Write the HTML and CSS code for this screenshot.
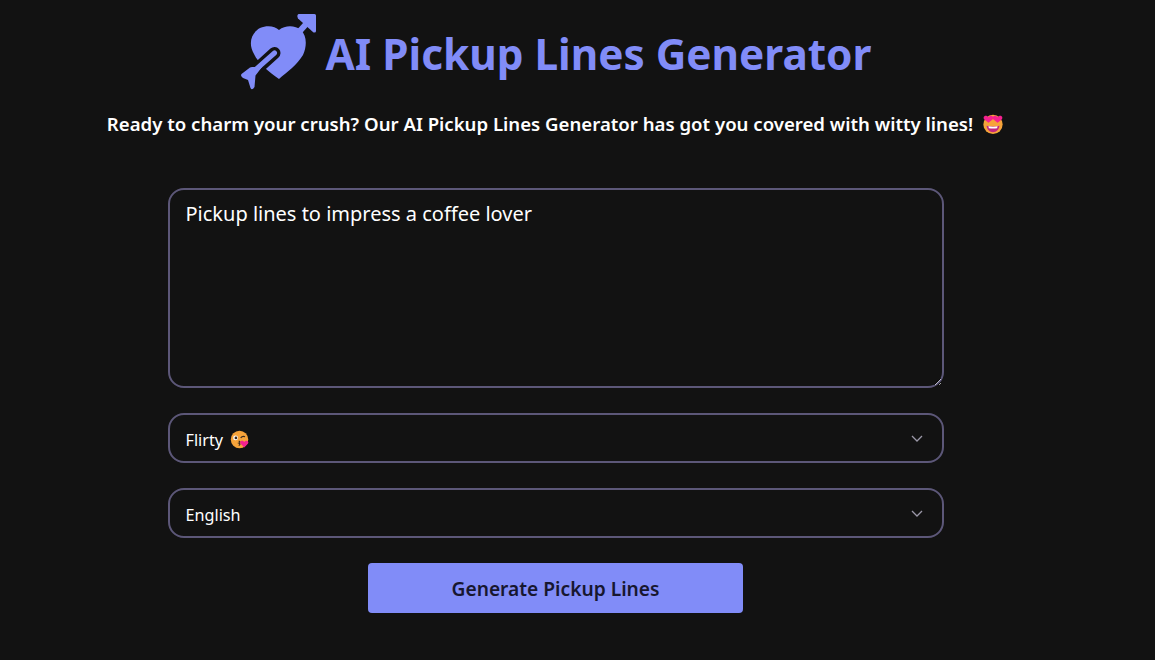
FILE: index.html
```html
<!DOCTYPE html>
<html lang="en">
<head>
  <meta charset="UTF-8">
  <meta name="viewport" content="width=device-width, initial-scale=1.0">
  <title>AI Pickup Lines Generator</title>
  <link rel="stylesheet" href="styles.css">
</head>
<body>
  <main class="page">
    <h1 class="title">
      <svg class="title-icon" viewBox="240 12 78 78" aria-hidden="true">
        <path d="M279 78C270 72 258 62 254 53 248 43 251 32 260 27 267 24 275 25 279 29 285 24 295 24 301 29 307 35 307 45 303 54 297 64 287 71 279 78Z" fill="#818cf8"/>
        <path d="M298 32 L308 21" stroke="#818cf8" stroke-width="6" fill="none"/>
        <path d="M298.500 13H314.500Q316 13 316 14.500V30Q316 32 313.500 31.500L298 17.500Q296.500 14 298.500 13Z" fill="#818cf8"/>
        <path d="M274.500 52 L248 76" stroke="#121212" stroke-width="12" stroke-linecap="round" fill="none"/>
        <path d="M274.500 52 L254 70" stroke="#818cf8" stroke-width="5" stroke-linecap="round" fill="none"/>
        <path d="M241.500 73 L250 66.500Q251 66 252 66H262L255.500 74.500 254.500 86Q252 90 250.500 87L248 79 243 77Q240 75 241.500 73Z" fill="#818cf8"/>
      </svg>
      <span class="title-text">AI Pickup Lines Generator</span>
    </h1>
    <p class="tagline">
      Ready to charm your crush? Our AI Pickup Lines Generator has got you covered with witty lines!
      <svg class="emoji emoji-big" viewBox="0 0 24 24" aria-hidden="true">
        <circle cx="12" cy="12.500" r="10.500" fill="#f6a33a"/>
        <path d="M5 14c4 1 10 1 14 0-.5 4.500-3.500 7-7 7s-6.500-2.500-7-7z" fill="#c2267e"/>
        <path d="M7 14.500c3 .6 7 .6 10 0l-.5 2c-3 .5-6 .5-9 0z" fill="#fff"/>
        <path d="M7 10.500 2.500 7C1 5.500 2 3 4 3c1.200 0 2.300.6 3 1.500C7.700 3.600 8.800 3 10 3c2 0 3 2.500 1.500 4z" fill="#f5218f"/>
        <path d="M17 10.500 12.500 7C11 5.500 12 3 14 3c1.200 0 2.300.6 3 1.500.7-.9 1.800-1.500 3-1.500 2 0 3 2.500 1.500 4z" fill="#f5218f"/>
      </svg>
    </p>
    <form class="form">
      <textarea class="prompt" rows="4">Pickup lines to impress a coffee lover</textarea>
      <div class="select" role="combobox" aria-expanded="false">
        <span>Flirty</span>
        <svg class="emoji" viewBox="0 0 24 24" aria-hidden="true">
          <circle cx="12" cy="12" r="11" fill="#f6a33a"/>
          <circle cx="7" cy="10" r="3" fill="#fff"/>
          <circle cx="7.500" cy="10" r="1.700" fill="#3a2a20"/>
          <path d="M13.500 10c1.500-2 3.500-2.500 5.500-1.500" stroke="#3a2a20" stroke-width="1.500" fill="none"/>
          <path d="M11 14c2 .5 2 2 .5 2.500 1.500.5 1.500 2 -.5 3" stroke="#3a2a20" stroke-width="1.500" fill="none"/>
          <path d="M18 22l-4.500-4.500c-1.500-1.500-.5-4 1.500-4 1.200 0 2.300.6 3 1.500.7-.9 1.800-1.500 3-1.500 2 0 3 2.500 1.500 4z" fill="#f5218f"/>
        </svg>
        <svg class="chevron" viewBox="0 0 12 7" aria-hidden="true"><path d="M1 1l5 5 5-5" fill="none" stroke="#9b98a8" stroke-width="1.300"/></svg>
      </div>
      <div class="select" role="combobox" aria-expanded="false">
        <span>English</span>
        <svg class="chevron" viewBox="0 0 12 7" aria-hidden="true"><path d="M1 1l5 5 5-5" fill="none" stroke="#9b98a8" stroke-width="1.300"/></svg>
      </div>
      <button class="generate" type="button">Generate Pickup Lines</button>
    </form>
  </main>
</body>
</html>
```

FILE: styles.css
```css
* { margin: 0; padding: 0; box-sizing: border-box; }
html { color-scheme: dark; }
body {
  background: #121212;
  color: #fff;
  font-family: "Noto Sans", "Open Sans", sans-serif;
  overflow: hidden;
}
.page {
  width: 1111px;
  display: flex;
  flex-direction: column;
  align-items: center;
  padding-top: 12px;
}
.title {
  display: flex;
  align-items: center;
  gap: 8px;
  height: 80px;
  color: #818cf8;
  font-size: 42.300px;
  font-weight: 700;
}
.title-text { padding-top: 3px; }
.title-icon { width: 78px; height: 78px; }
.tagline {
  display: flex;
  align-items: center;
  gap: 9px;
  margin-top: 16px;
  height: 30px;
  font-size: 18.600px;
  font-weight: 600;
}
.emoji { width: 19px; height: 19px; margin-top: -1px; }
.emoji-big { width: 22px; height: 22px; margin-top: 1px; }
.form {
  display: flex;
  flex-direction: column;
  align-items: center;
  gap: 25px;
  width: 776px;
  margin-top: 50px;
}
.prompt {
  display: block;
  width: 100%;
  height: 200px;
  padding: 10px 16px;
  background: transparent;
  border: 2px solid #5c5778;
  border-radius: 16px;
  color: #fff;
  font: 20px/1.4 "Noto Sans", "Open Sans", sans-serif;
  outline: none;
}
.select {
  display: flex;
  align-items: center;
  gap: 7px;
  width: 100%;
  height: 50px;
  padding: 3px 19px 0 16px;
  border: 2px solid #5c5778;
  border-radius: 16px;
  font-size: 16.200px;
}
.chevron { width: 12px; height: 7px; margin-left: auto; margin-top: -3px; }
.generate {
  width: 375px;
  height: 50px;
  background: #818cf8;
  border: none;
  border-radius: 4px;
  color: #171730;
  font: 600 19.200px "Noto Sans", "Open Sans", sans-serif;
}
```
